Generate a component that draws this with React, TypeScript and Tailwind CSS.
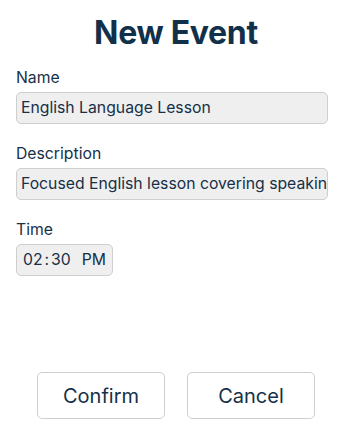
import React from "react";

export default function App() {
  const font = { fontFamily: "Inter, 'Noto Sans', sans-serif" };
  return (
    <div className="w-[352px] h-[435px] bg-white flex flex-col pl-4 pr-6 text-[#163048]" style={font}>
      <h1 className="text-[32px] font-bold text-center leading-none mt-[17px] text-[#11304a] tracking-[-0.3px] pl-2">New Event</h1>
      <div className="mt-[20px] text-[15.75px] leading-[18px]">Name</div>
      <div className="mt-[5px] h-[32px] rounded-[5px] border border-[#cfcfcf] bg-[#efefef] flex items-center px-[4px] text-[15.75px] overflow-hidden whitespace-nowrap">English Language Lesson</div>
      <div className="mt-[21px] text-[15.75px] leading-[18px]">Description</div>
      <div className="mt-[5px] h-[32px] rounded-[5px] border border-[#cfcfcf] bg-[#efefef] flex items-center px-[4px] text-[15.75px] overflow-hidden whitespace-nowrap">Focused English lesson covering speaking and listening</div>
      <div className="mt-[21px] text-[15.75px] leading-[18px]">Time</div>
      <div className="mt-[5px] w-[97px] h-[32px] rounded-[5px] border border-[#cfcfcf] bg-[#efefef] flex items-center pl-[6px] text-[15.75px] whitespace-nowrap">
        <span>02</span><span className="mx-[2px]">:</span><span>30</span><span className="ml-[11px]">PM</span>
      </div>
      <div className="flex-1" />
      <div className="flex justify-center gap-[22px] mb-[16px] pl-2">
        <button className="w-[128px] h-[47px] rounded-[5px] border border-[#cfcfcf] bg-white text-[20px] text-[#163048]">Confirm</button>
        <button className="w-[128px] h-[47px] rounded-[5px] border border-[#cfcfcf] bg-white text-[20px] text-[#163048]">Cancel</button>
      </div>
    </div>
  );
}
